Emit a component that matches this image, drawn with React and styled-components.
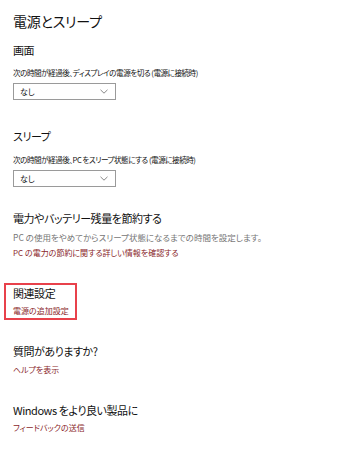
import React from "react";
import styled, { createGlobalStyle } from "styled-components";

const Global = createGlobalStyle`
  html, body { margin: 0; padding: 0; background: #fff; }
  body {
    font-family: "Noto Sans CJK JP", "Noto Sans", sans-serif;
    font-feature-settings: "palt";
    color: #000;
    -webkit-font-smoothing: antialiased;
  }
`;

const Page = styled.div`
  width: 340px;
  height: 473px;
  box-sizing: border-box;
  padding: 12px 0 0 13px;
  background: #fff;
`;

const Title = styled.h1`
  margin: 0;
  font-size: 14px;
  line-height: 18px;
  letter-spacing: -0.2px;
  font-weight: 400;
  color: #111;
`;

const Heading = styled.h2`
  margin: ${(p) => p.$top || 0}px 0 0;
  font-size: 11px;
  line-height: 14px;
  letter-spacing: -0.45px;
  font-weight: 400;
  color: #111;
`;

const Label = styled.div`
  margin-top: ${(p) => p.$top || 0}px;
  font-size: 7.6px;
  line-height: 11px;
  letter-spacing: -0.5px;
  color: #111;
`;

const Desc = styled.div`
  margin-top: ${(p) => p.$top || 0}px;
  font-size: 8.5px;
  line-height: 11px;
  color: #767676;
`;

const Link = styled.a`
  display: block;
  margin-top: ${(p) => p.$top || 0}px;
  font-size: 8px;
  line-height: 11px;
  color: #8a1f2b;
  text-decoration: none;
`;

const Select = styled.div`
  margin-top: ${(p) => p.$top || 0}px;
  width: 103px;
  height: 17px;
  box-sizing: border-box;
  border: 1.5px solid #9a9a9a;
  display: flex;
  align-items: center;
  justify-content: space-between;
  padding: 0 7px 0 6px;
  font-size: 8px;
  color: #111;
`;

const Related = styled.div`
  margin: 25px 0 0 -9px;
  width: 73px;
  box-sizing: border-box;
  border: 2px solid #e8414b;
  padding: 0.5px 0 2.5px 7px;
`;

const Chevron = () => (
  <svg width="8" height="5" viewBox="0 0 8 5">
    <path d="M0.5 0.8 L4 4.2 L7.5 0.8" fill="none" stroke="#7a7a7a" strokeWidth="0.9" />
  </svg>
);

export default function App() {
  return (
    <Page>
      <Global />
      <Title>電源とスリープ</Title>
      <Heading $top={13}>画面</Heading>
      <Label $top={10}>次の時間が経過後、ディスプレイの電源を切る (電源に接続時)</Label>
      <Select $top={5}>
        <span>なし</span>
        <Chevron />
      </Select>
      <Heading $top={29}>スリープ</Heading>
      <Label $top={11}>次の時間が経過後、PC をスリープ状態にする (電源に接続時)</Label>
      <Select $top={5}>
        <span>なし</span>
        <Chevron />
      </Select>
      <Heading $top={24}>電力やバッテリー残量を節約する</Heading>
      <Desc $top={6.5}>PC の使用をやめてからスリープ状態になるまでの時間を設定します。</Desc>
      <Link $top={4.5}>PC の電力の節約に関する詳しい情報を確認する</Link>
      <Related>
        <Heading>関連設定</Heading>
        <Link $top={5}>電源の追加設定</Link>
      </Related>
      <Heading $top={24}>質問がありますか?</Heading>
      <Link $top={5.5}>ヘルプを表示</Link>
      <Heading $top={28.5}>Windows をより良い製品に</Heading>
      <Link $top={5}>フィードバックの送信</Link>
    </Page>
  );
}
